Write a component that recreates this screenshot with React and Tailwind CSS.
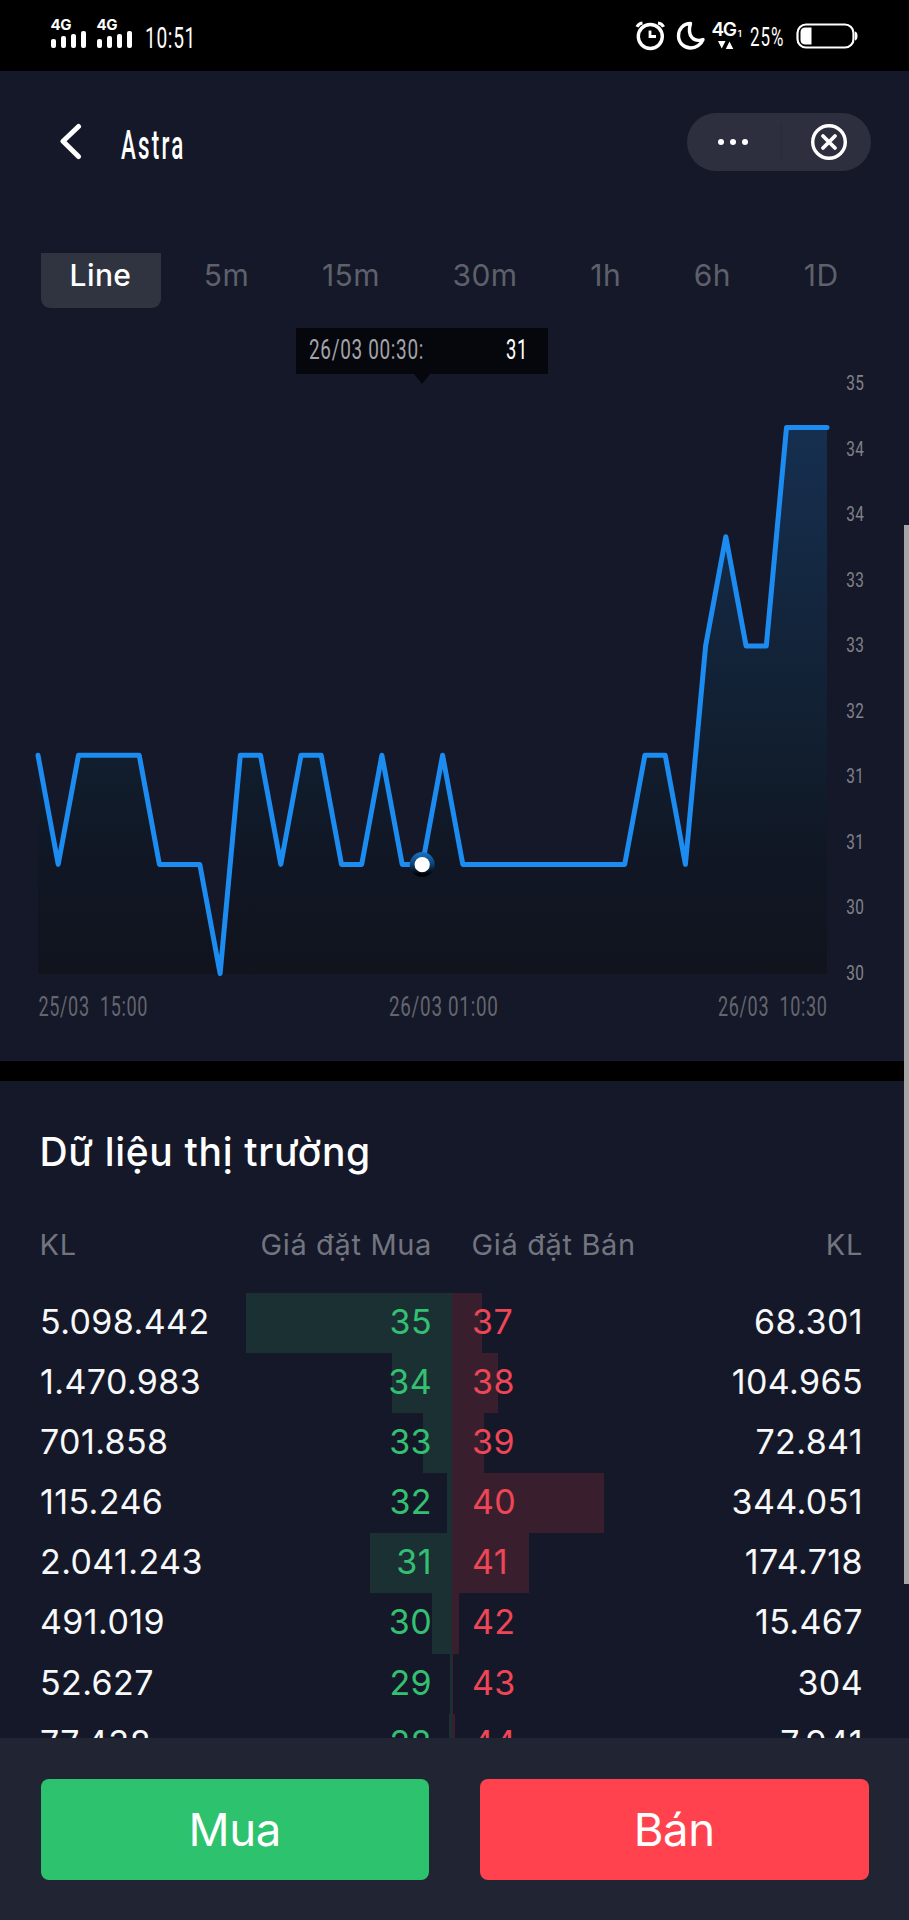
import React from "react";

const LEVELS = [
  2, 1, 2, 2, 2, 2, 1, 1, 1, 0, 2, 2, 1, 2, 2, 1, 1, 2, 1, 1, 2, 1, 1, 1, 1,
  1, 1, 1, 1, 1, 2, 2, 1, 3, 4, 3, 3, 5, 5, 5,
];
const px = (i) => 38 + (i * 789) / 39;
const py = (level) => 973.6 - level * 109.2;
const LINE = LEVELS.map((l, i) => `${px(i).toFixed(1)},${py(l).toFixed(1)}`).join(" ");
const AREA = `38,974 ${LINE} 827,974`;

const PRICES = [35, 34, 34, 33, 33, 32, 31, 31, 30, 30];
const TIMES = [
  { label: "25/03  15:00", x: 38.5 },
  { label: "26/03 01:00", x: 389 },
  { label: "26/03  10:30", x: 718 },
];
const TABS = ["Line", "5m", "15m", "30m", "1h", "6h", "1D"];

const ROWS = [
  { bidVol: "5.098.442", bid: 35, bidW: 206, ask: 37, askW: 30, askVol: "68.301" },
  { bidVol: "1.470.983", bid: 34, bidW: 60, ask: 38, askW: 46, askVol: "104.965" },
  { bidVol: "701.858", bid: 33, bidW: 29, ask: 39, askW: 32, askVol: "72.841" },
  { bidVol: "115.246", bid: 32, bidW: 5, ask: 40, askW: 152, askVol: "344.051" },
  { bidVol: "2.041.243", bid: 31, bidW: 82, ask: 41, askW: 77, askVol: "174.718" },
  { bidVol: "491.019", bid: 30, bidW: 20, ask: 42, askW: 7, askVol: "15.467" },
  { bidVol: "52.627", bid: 29, bidW: 2, ask: 43, askW: 1, askVol: "304" },
  { bidVol: "77.438", bid: 28, bidW: 3, ask: 44, askW: 3, askVol: "7.941" },
];

function Signal() {
  return (
    <div className="flex w-[37px] flex-col">
      <span className="h-[13px] font-['Inter'] text-[15px] leading-[13px] font-bold tracking-[-0.5px]">4G</span>
      <div className="flex h-[17px] items-end gap-[5px]">
        <i className="h-[9px] w-[5px] rounded-[2px] bg-white" />
        <i className="h-[12px] w-[5px] rounded-[2px] bg-white" />
        <i className="h-[14px] w-[5px] rounded-[2px] bg-white" />
        <i className="h-[17px] w-[5px] rounded-[2px] bg-white" />
      </div>
    </div>
  );
}

function Narrow({ text, width, height, size, className }) {
  return (
    <svg width={width} height={height} className="block shrink-0 overflow-visible">
      <text
        x="0"
        y={height}
        textLength={width}
        lengthAdjust="spacingAndGlyphs"
        fontSize={size}
        className={className}
        style={{ whiteSpace: "pre" }}
      >
        {text}
      </text>
    </svg>
  );
}

function StatusBar() {
  return (
    <div className="flex h-[71px] items-start bg-black text-white">
      <div className="flex gap-[9px] pt-[18px] pl-[50.500px]">
        <Signal />
        <Signal />
      </div>
      <div className="pt-[27px] pl-[11.500px]">
        <Narrow text="10:51" width={51} height={21} size={29} className="fill-white font-['Roboto'] tracking-[1px]" />
      </div>
      <svg width="30" height="30" viewBox="0 0 30 30" className="mt-[21px] ml-[439px]" fill="none" stroke="white">
        <circle cx="15.3" cy="15.5" r="12" strokeWidth="3.4" />
        <path d="M15 9.5v6h6" strokeWidth="2.8" />
        <path d="M2 5.8Q3.5 2.5 7.5 2M23 2Q27 2.5 28.5 5.8" strokeWidth="3.2" />
      </svg>
      <svg width="30" height="30" viewBox="0 0 30 30" className="mt-[21px] ml-[11px]" fill="none" stroke="white">
        <path
          d="M14.5 2.5C7.500 2.500 2.500 8 2.500 14.800C2.500 21.800 8 27 14.800 27C20 27 25 23.500 27 18.500C18.500 21.500 10.500 16 14.500 2.500Z"
          strokeWidth="3.4"
          strokeLinejoin="round"
        />
      </svg>
      <div className="ml-[5.500px] flex w-[29.500px] flex-col pt-[21px]">
        <div className="flex h-[17px] items-end font-['Inter']">
          <span className="text-[19px] leading-[16px] font-semibold tracking-[-1.3px]">4G</span>
          <span className="ml-[2px] text-[9px] leading-[8px] font-semibold">1</span>
        </div>
        <svg width="16" height="8" viewBox="0 0 16 8" className="mt-[3px] ml-[6px]" fill="white">
          <path d="M0 0h7.500L3.750 7.500zM7.800 8h7.500L11.500.5z" />
        </svg>
      </div>
      <div className="pt-[28px] pl-[9px]">
        <Narrow text="25%" width={34.5} height={18} size={25} className="fill-white font-['Roboto'] tracking-[1.5px]" />
      </div>
      <svg width="62" height="26" viewBox="0 0 62 26" className="mt-[22.500px] ml-[11px]" fill="none">
        <rect x="1.500" y="1.500" width="56" height="23" rx="8.500" stroke="white" strokeWidth="2.200" />
        <path d="M15.500 4.500H9.500Q4.500 4.500 4.500 9.500v7q0 5 5 5h6z" fill="white" />
        <path d="M59 8.500q2.500.8 2.500 4.500t-2.500 4.500z" fill="white" />
      </svg>
    </div>
  );
}

function Header() {
  return (
    <header className="flex h-[182px] items-start">
      <svg width="24" height="40" viewBox="0 0 24 40" className="mt-[50px] ml-[58px]" fill="none">
        <path d="M20.500 5.500L5 20.300L20.500 35.500" stroke="white" strokeWidth="5" strokeLinecap="round" strokeLinejoin="round" />
      </svg>
      <h1 className="mt-[59px] ml-[39px]">
        <Narrow text="Astra" width={64.5} height={29} size={40} className="fill-white font-['Roboto'] font-medium tracking-[4px]" />
      </h1>
      <div className="mt-[42px] ml-auto mr-[38px] flex h-[58px] w-[184px] items-center rounded-full bg-[#2d2f3e]">
        <div className="flex h-[38px] w-[95px] items-center justify-center gap-[6px] border-r-2 border-[#2a2c3a] pr-[1px]">
          <i className="size-[6px] rounded-full bg-white" />
          <i className="size-[6px] rounded-full bg-white" />
          <i className="size-[6px] rounded-full bg-white" />
        </div>
        <svg width="38" height="38" viewBox="0 0 38 38" className="ml-[28px]" fill="none" stroke="white" strokeLinecap="round">
          <circle cx="19" cy="19" r="16.300" strokeWidth="3.400" />
          <path d="M13 13l12 12M25 13L13 25" strokeWidth="3.800" />
        </svg>
      </div>
    </header>
  );
}

function Tabs() {
  return (
    <nav className="flex h-[55px] justify-between pr-[41px] pl-[40.500px] font-['Inter'] text-[30px] leading-[44px] tracking-[0.4px]">
      {TABS.map((t, i) => (
        <div
          key={t}
          className={
            i === 0
              ? "w-[120px] rounded-b-[9px] bg-[#303340] text-center font-medium text-white"
              : "px-[29.500px] text-[#5e606b]"
          }
        >
          {t}
        </div>
      ))}
    </nav>
  );
}

function Chart() {
  return (
    <section className="relative h-[753px]">
      <svg width="909" height="753" viewBox="0 308 909 753" className="block">
        <defs>
          <linearGradient id="area" gradientUnits="userSpaceOnUse" x1="0" y1="427" x2="0" y2="974">
            <stop offset="0" stopColor="#162f50" />
            <stop offset="0.6" stopColor="#111e2e" />
            <stop offset="0.8" stopColor="#101624" />
            <stop offset="1" stopColor="#11141d" />
          </linearGradient>
          <linearGradient id="marker" x1="0" y1="0" x2="0" y2="1">
            <stop offset="0" stopColor="#1873c9" />
            <stop offset="0.5" stopColor="#0b4172" />
            <stop offset="0.9" stopColor="#000000" />
          </linearGradient>
        </defs>
        <polygon points={AREA} fill="url(#area)" />
        <polyline points={LINE} fill="none" stroke="#1d8cf0" strokeWidth="5" strokeLinejoin="round" strokeLinecap="round" />
        <circle cx="422.200" cy="864.500" r="12.500" fill="url(#marker)" />
        <circle cx="422.200" cy="864.700" r="7.600" fill="white" />
        {PRICES.map((p, i) => (
          <text
            key={i}
            x="846.300"
            y={390.3 + i * 65.5}
            textLength="18"
            lengthAdjust="spacingAndGlyphs"
            className="fill-[#80828c] font-['Roboto'] text-[21px] tracking-[0.5px]"
          >
            {p}
          </text>
        ))}
        {TIMES.map((t) => (
          <text
            key={t.label}
            x={t.x}
            y="1015.500"
            textLength="109.500"
            lengthAdjust="spacingAndGlyphs"
            className="fill-[#64666f] font-['Roboto'] text-[28px] tracking-[1px]"
            style={{ whiteSpace: "pre" }}
          >
            {t.label}
          </text>
        ))}
      </svg>
      <div className="absolute top-[20px] left-[296px] flex h-[46px] w-[252px] items-start justify-between bg-[#06070c] pt-[9.500px] pr-[20px] pl-[13px]">
        <Narrow text="26/03 00:30:" width={115} height={21} size={28} className="fill-[#a3a4a8] font-['Roboto'] tracking-[1px]" />
        <Narrow text="31" width={22} height={21} size={28} className="fill-white font-['Roboto'] tracking-[1px]" />
        <svg width="16" height="10" viewBox="0 0 16 10" className="absolute top-[46px] left-[118px]">
          <path d="M0 0h16L8 10z" fill="#06070c" />
        </svg>
      </div>
    </section>
  );
}

function OrderRow({ row }) {
  return (
    <div className="flex h-[60.2px] shrink-0 font-['Inter'] text-[34px] leading-[57px] tracking-[0.4px]">
      <div className="flex w-[452px] justify-between pl-[40px]">
        <span className="text-[#f7f8fa]">{row.bidVol}</span>
        <div className="relative w-[206px] pr-[20px] text-right text-[#34c072]">
          <i className="absolute inset-y-0 right-0 bg-[#1a3033]" style={{ width: row.bidW }} />
          <span className="relative">{row.bid}</span>
        </div>
      </div>
      <div className="flex w-[452px] justify-between pr-[41px]">
        <div className="relative w-[206px] pl-[20px] text-[#ee4656]">
          <i className="absolute inset-y-0 left-0 bg-[#391f2d]" style={{ width: row.askW }} />
          <span className="relative">{row.ask}</span>
        </div>
        <span className="text-[#f7f8fa]">{row.askVol}</span>
      </div>
    </div>
  );
}

function Market() {
  return (
    <section className="flex h-[657px] flex-col overflow-hidden font-['Inter']">
      <h2 className="mt-[46px] h-[50px] pl-[39.500px] text-[39px] leading-[50px] font-medium tracking-[0.68px] text-white">Dữ liệu thị trường</h2>
      <div className="mt-[48px] flex h-[40px] text-[29px] leading-[40px] tracking-[0.65px] text-[#72747f]">
        <div className="flex w-[452px] justify-between pr-[20px] pl-[39.500px]">
          <span>KL</span>
          <span>Giá đặt Mua</span>
        </div>
        <div className="flex w-[452px] justify-between pr-[41px] pl-[19.500px]">
          <span>Giá đặt Bán</span>
          <span>KL</span>
        </div>
      </div>
      <div className="mt-[27.500px] flex flex-col">
        {ROWS.map((r) => (
          <OrderRow key={r.bid} row={r} />
        ))}
      </div>
    </section>
  );
}

export default function App() {
  return (
    <main className="relative flex h-[1920px] w-[909px] flex-col overflow-hidden bg-[#151828] text-white">
      <StatusBar />
      <Header />
      <Tabs />
      <Chart />
      <div className="h-[20px] shrink-0 bg-black" />
      <Market />
      <footer className="flex h-[182px] shrink-0 items-start justify-between bg-[#212432] px-[40.500px] pt-[41px] font-['Inter'] text-[45.500px] leading-[101px] tracking-[-0.4px] text-white">
        <button className="h-[101px] w-[388.500px] rounded-[8px] bg-[#2dc26e]">Mua</button>
        <button className="h-[101px] w-[388.500px] rounded-[8px] bg-[#ff424d]">Bán</button>
      </footer>
      <div className="absolute top-[525px] right-0 h-[1059px] w-[5px] bg-[#a5a6a5]" />
    </main>
  );
}
